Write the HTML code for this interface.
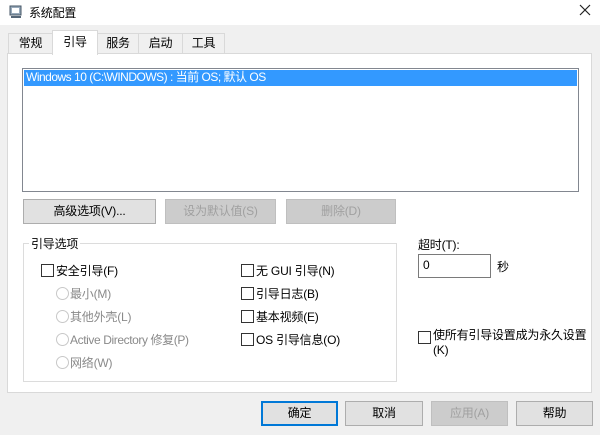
<!DOCTYPE html>
<html><head><meta charset="utf-8"><style>
*{margin:0;padding:0;box-sizing:border-box}
body{width:600px;height:435px;background:#f0f0f0;font-family:"Liberation Sans","Noto Sans CJK SC",sans-serif;font-size:12px;color:#000;position:relative;overflow:hidden;letter-spacing:-0.2px}
.a{position:absolute;white-space:nowrap}
.tb{position:absolute;left:0;top:0;width:600px;height:25px;background:#fff}
.tab{position:absolute;top:33px;height:21px;border:1px solid #d9d9d9;border-bottom:none;background:#f0f0f0;text-align:center;line-height:19px}
.panel{position:absolute;left:7px;top:53px;width:585px;height:340px;background:#fff;border:1px solid #d9d9d9}
.btn{position:absolute;height:25px;border:1px solid #adadad;background:#e1e1e1;text-align:center;line-height:23px}
.dis{color:#a0a0a0;border-color:#bfbfbf;background:#ccc}
.cb{position:absolute;width:13px;height:13px;border:1px solid #333;background:#fff}
.rd{position:absolute;width:13px;height:13px;border:1px solid #c8c8c8;border-radius:50%;background:#fff}
.g{color:#8a8a8a}
</style></head><body>
<div class="tb"></div>
<svg class="a" style="left:8px;top:4px" width="16" height="16"><rect x="2" y="2" width="11" height="9" fill="#9ab" stroke="#456"/><rect x="4" y="4" width="7" height="5" fill="#fff"/><rect x="3" y="12" width="10" height="2" fill="#567"/></svg>
<div class="a" style="left:29px;top:4px">系统配置</div>
<svg class="a" style="left:578px;top:3px" width="14" height="14"><path d="M2 2L12 12M12 2L2 12" stroke="#222" stroke-width="1.2"/></svg>
<div class="tab" style="left:8px;width:45px">常规</div>
<div class="tab" style="left:97px;width:42px">服务</div>
<div class="tab" style="left:138px;width:45px">启动</div>
<div class="tab" style="left:182px;width:43px">工具</div>
<div class="panel"></div>
<div class="tab" style="left:52px;top:30px;width:46px;height:25px;background:#fff;line-height:22px">引导</div>
<div class="a" style="left:22px;top:68px;width:557px;height:124px;border:1px solid #828790;background:#fff"></div>
<div class="a" style="left:24px;top:70px;width:553px;height:16px;background:#3399ff;color:#fff;line-height:15px;padding-left:2px;letter-spacing:-0.5px">Windows 10 (C:\WINDOWS) : 当前 OS; 默认 OS</div>
<div class="btn" style="left:23px;top:199px;width:133px">高级选项(V)...</div>
<div class="btn dis" style="left:165px;top:199px;width:111px">设为默认值(S)</div>
<div class="btn dis" style="left:286px;top:199px;width:110px">删除(D)</div>
<div class="a" style="left:23px;top:243px;width:374px;height:139px;border:1px solid #dcdcdc"></div>
<div class="a" style="left:29px;top:235px;background:#fff;padding:0 2px">引导选项</div>
<div class="cb" style="left:41px;top:264px"></div><div class="a" style="left:56px;top:262px">安全引导(F)</div>
<div class="rd" style="left:56px;top:287px"></div><div class="a g" style="left:70px;top:285px">最小(M)</div>
<div class="rd" style="left:56px;top:310px"></div><div class="a g" style="left:70px;top:308px">其他外壳(L)</div>
<div class="rd" style="left:56px;top:333px"></div><div class="a g" style="left:70px;top:331px;letter-spacing:-0.4px">Active Directory 修复(P)</div>
<div class="rd" style="left:56px;top:356px"></div><div class="a g" style="left:70px;top:354px">网络(W)</div>
<div class="cb" style="left:241px;top:264px"></div><div class="a" style="left:256px;top:262px">无 GUI 引导(N)</div>
<div class="cb" style="left:241px;top:287px"></div><div class="a" style="left:256px;top:285px">引导日志(B)</div>
<div class="cb" style="left:241px;top:310px"></div><div class="a" style="left:256px;top:308px">基本视频(E)</div>
<div class="cb" style="left:241px;top:333px"></div><div class="a" style="left:256px;top:331px">OS 引导信息(O)</div>
<div class="a" style="left:418px;top:236px">超时(T):</div>
<div class="a" style="left:418px;top:254px;width:73px;height:24px;border:1px solid #7a7a7a;background:#fff;padding:3px 0 0 4px">0</div>
<div class="a" style="left:497px;top:258px">秒</div>
<div class="cb" style="left:418px;top:331px"></div>
<div class="a" style="left:433px;top:328px;line-height:15px">使所有引导设置成为永久设置<br>(K)</div>
<div class="btn" style="left:261px;top:401px;width:77px;border:2px solid #0078d7;line-height:21px">确定</div>
<div class="btn" style="left:345px;top:401px;width:78px">取消</div>
<div class="btn dis" style="left:431px;top:401px;width:77px">应用(A)</div>
<div class="btn" style="left:516px;top:401px;width:77px">帮助</div>
</body></html>
